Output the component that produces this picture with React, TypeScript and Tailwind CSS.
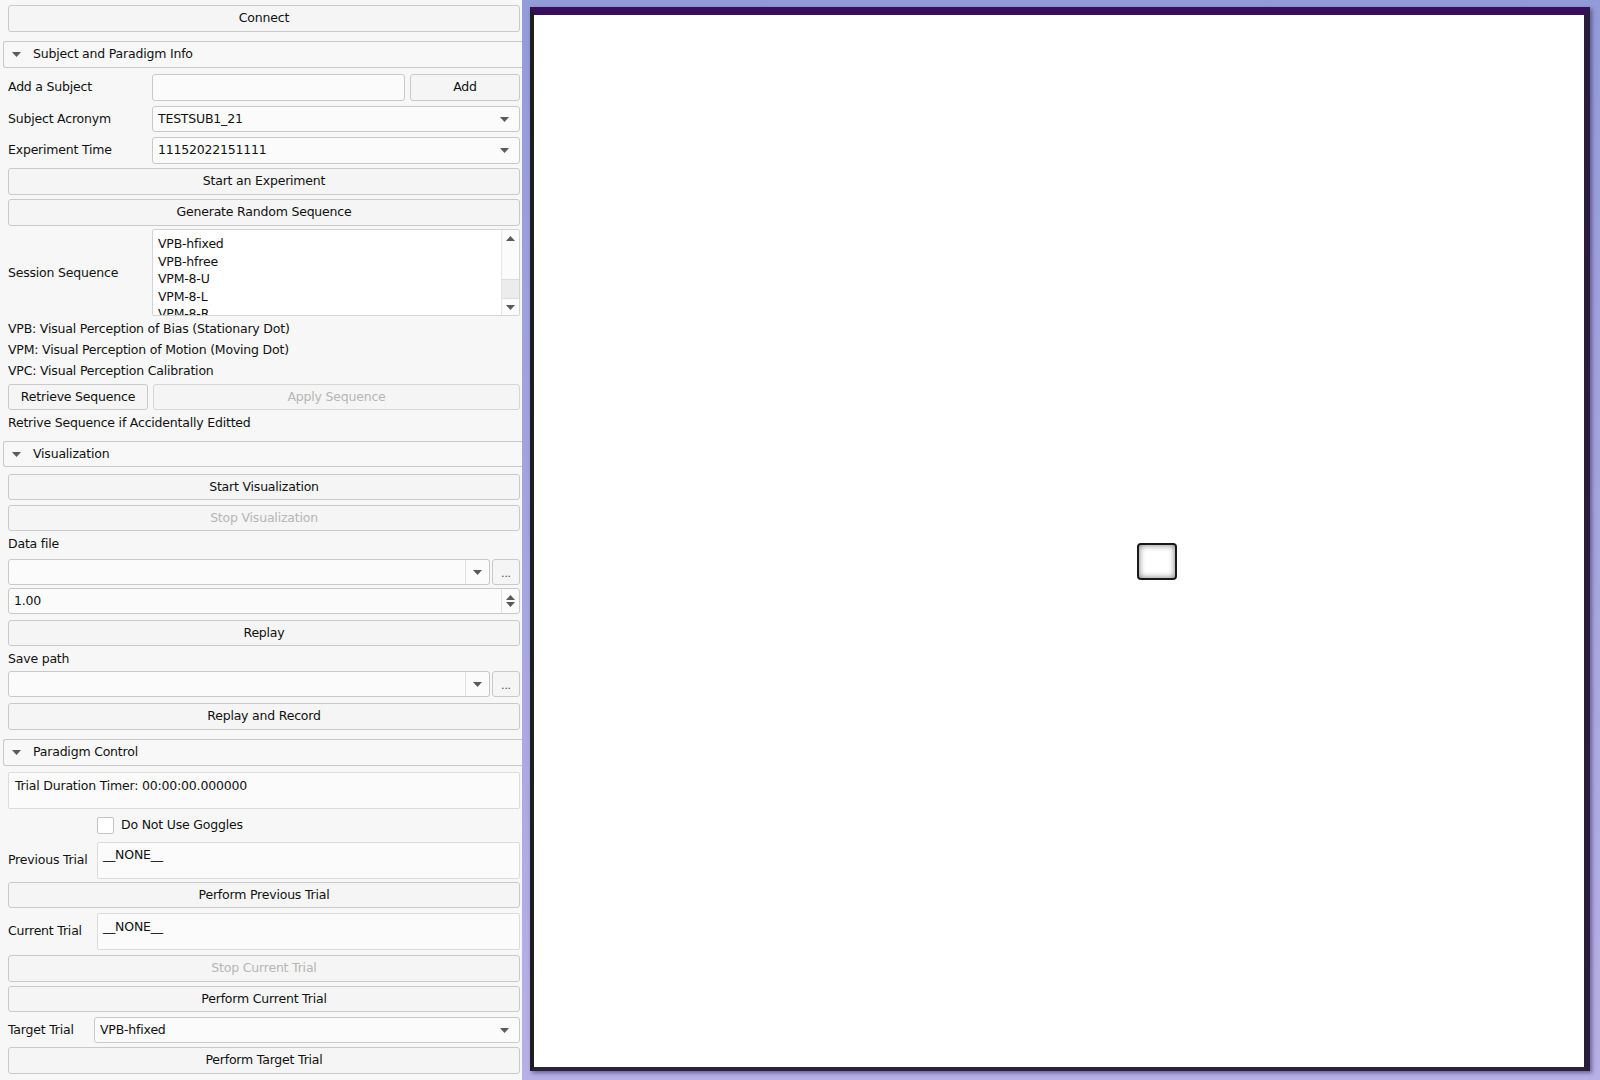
import React from "react";

const font = { fontFamily: '"DejaVu Sans", Verdana, sans-serif' };

function Arrow() {
  return (
    <svg width="9" height="5" viewBox="0 0 9 5" className="shrink-0">
      <path d="M0 0 L9 0 L4.5 5 Z" fill="#5a5a5a" />
    </svg>
  );
}

function UpArrow() {
  return (
    <svg width="9" height="5" viewBox="0 0 9 5" className="shrink-0">
      <path d="M0 5 L9 5 L4.5 0 Z" fill="#5a5a5a" />
    </svg>
  );
}

function Btn({ children, disabled = false, h = "h-[26px]", mt = "mt-[5px]" }: { children: React.ReactNode; disabled?: boolean; h?: string; mt?: string }) {
  return (
    <div
      className={`${mt} ${h} ml-[8px] mr-[2px] flex items-center justify-center rounded-[3px] border border-[#c9c9c9] bg-[#f4f5f4] ${disabled ? "text-[#b6b6b6]" : "text-[#111]"}`}
    >
      {children}
    </div>
  );
}

function Header({ title, mt, h = "h-[27px]" }: { title: string; mt: string; h?: string }) {
  return (
    <div className={`${mt} ${h} ml-[3px] flex items-center rounded-l-[3px] border-y border-l border-[#c9c9c9] bg-[#f7f8f7] pl-[8px]`}>
      <Arrow />
      <span className="ml-[12px] text-[#111]">{title}</span>
    </div>
  );
}

function Combo({ value, className = "" }: { value: string; className?: string }) {
  return (
    <div className={`flex items-center rounded-[3px] border border-[#c9c9c9] bg-[#fafbfa] pl-[5px] pr-[10px] ${className}`}>
      <span className="flex-1 text-[#111]">{value}</span>
      <Arrow />
    </div>
  );
}

function PathCombo({ mt }: { mt: string }) {
  return (
    <div className={`${mt} h-[26px] ml-[8px] mr-[2px] flex gap-[2px]`}>
      <div className="flex flex-1 items-center rounded-[3px] border border-[#c9c9c9] bg-[#fafbfa]">
        <div className="flex-1" />
        <div className="flex h-full w-[24px] items-center justify-center border-l border-[#e2e2e2]">
          <Arrow />
        </div>
      </div>
      <div className="flex w-[28px] items-end justify-center rounded-[3px] border border-[#c9c9c9] bg-[#f4f5f4] pb-[5px] text-[10px] leading-none tracking-normal text-[#333]">
        ...
      </div>
    </div>
  );
}

export default function App() {
  return (
    <div className="flex h-[1080px] w-[1600px] overflow-hidden bg-white text-[12.5px] tracking-[-0.2px]" style={font}>
      {/* Left panel */}
      <div className="flex w-[522px] shrink-0 flex-col bg-[#f6f7f6]">
        <Btn mt="mt-[5px]" h="h-[27px]">Connect</Btn>

        <Header title="Subject and Paradigm Info" mt="mt-[9px]" />

        <div className="mt-[6px] h-[27px] ml-[8px] mr-[2px] flex items-stretch">
          <div className="w-[144px] flex items-center text-[#111]">Add a Subject</div>
          <div className="w-[253px] rounded-[3px] border border-[#c9c9c9] bg-[#fafbfa]" />
          <div className="ml-[5px] flex flex-1 items-center justify-center rounded-[3px] border border-[#c9c9c9] bg-[#f4f5f4] text-[#111]">Add</div>
        </div>

        <div className="mt-[5px] h-[26px] ml-[8px] mr-[2px] flex items-stretch">
          <div className="w-[144px] flex items-center text-[#111]">Subject Acronym</div>
          <Combo value="TESTSUB1_21" className="flex-1" />
        </div>

        <div className="mt-[5px] h-[27px] ml-[8px] mr-[2px] flex items-stretch">
          <div className="w-[144px] flex items-center text-[#111]">Experiment Time</div>
          <Combo value="11152022151111" className="flex-1" />
        </div>

        <Btn mt="mt-[4px]" h="h-[27px]">Start an Experiment</Btn>
        <Btn mt="mt-[4px]" h="h-[27px]">Generate Random Sequence</Btn>

        <div className="mt-[3px] h-[87px] ml-[8px] mr-[2px] flex items-stretch">
          <div className="w-[144px] flex items-center pt-[2px] text-[#111]">Session Sequence</div>
          <div className="flex flex-1 overflow-hidden rounded-[2px] border border-[#d4d4d4] bg-white">
            <div className="flex-1 overflow-hidden pl-[5px] pt-[5px] leading-[17.5px] text-[#111]">
              <div>VPB-hfixed</div>
              <div>VPB-hfree</div>
              <div>VPM-8-U</div>
              <div>VPM-8-L</div>
              <div>VPM-8-R</div>
            </div>
            <div className="flex w-[18px] flex-col border-l border-[#e6e6e6] bg-[#fbfbfb]">
              <div className="flex h-[16px] items-center justify-center">
                <UpArrow />
              </div>
              <div className="flex-1" />
              <div className="h-[20px] border-y border-[#dcdcdc] bg-[#ececec]" />
              <div className="flex h-[16px] items-center justify-center">
                <Arrow />
              </div>
            </div>
          </div>
        </div>

        <div className="mt-[3px] h-[21px] ml-[8px] flex items-center text-[#111]">VPB: Visual Perception of Bias (Stationary Dot)</div>
        <div className="h-[21px] ml-[8px] flex items-center text-[#111]">VPM: Visual Perception of Motion (Moving Dot)</div>
        <div className="h-[21px] ml-[8px] flex items-center text-[#111]">VPC: Visual Perception Calibration</div>

        <div className="mt-[2px] h-[26px] ml-[8px] mr-[2px] flex gap-[5px]">
          <div className="flex w-[140px] items-center justify-center rounded-[3px] border border-[#c9c9c9] bg-[#f4f5f4] text-[#111]">Retrieve Sequence</div>
          <div className="flex flex-1 items-center justify-center rounded-[3px] border border-[#d6d6d6] bg-[#f4f5f4] text-[#b6b6b6]">Apply Sequence</div>
        </div>

        <div className="mt-[3px] h-[20px] ml-[8px] flex items-center text-[#111]">Retrive Sequence if Accidentally Editted</div>

        <Header title="Visualization" mt="mt-[8px]" h="h-[26px]" />
        <Btn mt="mt-[7px]">Start Visualization</Btn>
        <Btn disabled>Stop Visualization</Btn>

        <div className="mt-[3px] h-[20px] ml-[8px] flex items-center text-[#111]">Data file</div>
        <PathCombo mt="mt-[5px]" />

        <div className="mt-[3px] h-[26px] ml-[8px] mr-[2px] flex items-stretch rounded-[3px] border border-[#c9c9c9] bg-[#fafbfa]">
          <div className="flex flex-1 items-center pl-[5px] text-[#111]">1.00</div>
          <div className="flex w-[18px] flex-col items-center justify-center gap-[2px] border-l border-[#e2e2e2]">
            <UpArrow />
            <Arrow />
          </div>
        </div>

        <Btn mt="mt-[6px]">Replay</Btn>

        <div className="mt-[3px] h-[20px] ml-[8px] flex items-center text-[#111]">Save path</div>
        <PathCombo mt="mt-[2px]" />
        <Btn mt="mt-[6px]" h="h-[27px]">Replay and Record</Btn>

        <Header title="Paradigm Control" mt="mt-[9px]" />

        <div className="mt-[6px] h-[37px] ml-[8px] mr-[2px] flex items-start rounded-[2px] border border-[#dcdcdc] bg-[#fafbfa] pl-[6px] pt-[4px] text-[#111]">
          Trial Duration Timer: 00:00:00.000000
        </div>

        <div className="mt-[8px] h-[17px] ml-[8px] flex items-center">
          <div className="ml-[89px] h-[17px] w-[17px] rounded-[2px] border border-[#c4c4c4] bg-white" />
          <span className="ml-[7px] text-[#111]">Do Not Use Goggles</span>
        </div>

        <div className="mt-[8px] h-[37px] ml-[8px] mr-[2px] flex items-stretch">
          <div className="w-[89px] flex items-center text-[#111]">Previous Trial</div>
          <div className="flex-1 rounded-[2px] border border-[#dcdcdc] bg-[#fafbfa] pl-[5px] pt-[3px] text-[#111]">__NONE__</div>
        </div>

        <Btn mt="mt-[3px]">Perform Previous Trial</Btn>

        <div className="mt-[5px] h-[37px] ml-[8px] mr-[2px] flex items-stretch">
          <div className="w-[89px] flex items-center text-[#111]">Current Trial</div>
          <div className="flex-1 rounded-[2px] border border-[#dcdcdc] bg-[#fafbfa] pl-[5px] pt-[4px] text-[#111]">__NONE__</div>
        </div>

        <Btn disabled h="h-[27px]">Stop Current Trial</Btn>
        <Btn mt="mt-[4px]">Perform Current Trial</Btn>

        <div className="mt-[5px] h-[26px] ml-[8px] mr-[2px] flex items-stretch">
          <div className="w-[86px] flex items-center text-[#111]">Target Trial</div>
          <Combo value="VPB-hfixed" className="flex-1" />
        </div>

        <Btn mt="mt-[4px]" h="h-[27px]">Perform Target Trial</Btn>
      </div>

      {/* Right area */}
      <div className="flex flex-1 flex-col bg-gradient-to-b from-[#939bd9] to-[#b7b0e6] pb-[9px] pl-[8px] pr-[10px] pt-[7px]">
        <div className="relative flex-1 border-b-[4px] border-l-[4px] border-r-[6px] border-t-[8px] border-b-[#2a2236] border-l-[#1e1e1e] border-r-[#2a1d3c] border-t-[#3a0e5c] bg-white shadow-[2px_2px_4px_rgba(40,20,80,0.5)]">
          <div className="absolute left-[603px] top-[528px] h-[37px] w-[40px] rounded-[4px] border-2 border-[#1a1a1a] bg-white shadow-[inset_0_0_6px_rgba(0,0,0,0.55)]" />
        </div>
      </div>
    </div>
  );
}
